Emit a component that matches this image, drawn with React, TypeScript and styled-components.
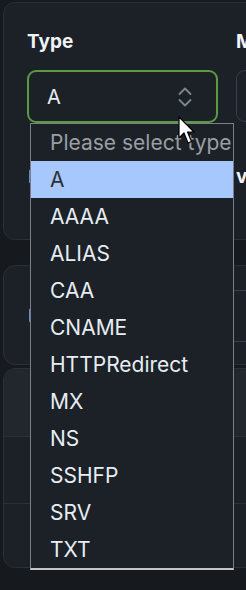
import * as React from 'react';
import styled, { createGlobalStyle } from 'styled-components';

const TYPES = ['A', 'AAAA', 'ALIAS', 'CAA', 'CNAME', 'HTTPRedirect', 'MX', 'NS', 'SSHFP', 'SRV', 'TXT'];

const App: React.FC = () => {
	const selected = 'A';
	return (
		<>
			<GlobalStyle />
			<Page>
				<RecordCard>
					<FieldGrid>
						<Field>
							<Label>Type</Label>
							<SelectWrap>
								<SelectBox $focused>
									<span>{selected}</span>
									<svg width="14" height="20" viewBox="0 0 14 20" fill="none">
										<polyline points="1.5,7 7,1.5 12.5,7" stroke="#7d8590" strokeWidth="1.8" strokeLinecap="round" strokeLinejoin="round" />
										<polyline points="1.5,13 7,18.5 12.5,13" stroke="#7d8590" strokeWidth="1.8" strokeLinecap="round" strokeLinejoin="round" />
									</svg>
								</SelectBox>
								<ListBox>
									<Option $placeholder>Please select type</Option>
									{TYPES.map((t) => (
										<Option key={t} $active={t === selected}>
											{t}
										</Option>
									))}
								</ListBox>
								<Cursor width="18" height="30" viewBox="0 0 18 30">
									<path d="M1 1 L1 22 L6 17 L10 27 L13.5 25.5 L9.5 16 L16 16 Z" fill="#fff" stroke="#000" strokeWidth="1.2" strokeLinejoin="round" />
								</Cursor>
							</SelectWrap>
						</Field>
						<Field>
							<Label>MX Priority</Label>
							<Input />
						</Field>
					</FieldGrid>
					<OptionRow>
						<Check />
						<SubLabel>value</SubLabel>
					</OptionRow>
				</RecordCard>

				<ToggleCard>
					<Check />
					<Input />
				</ToggleCard>

				<TableCard>
					<TableHead />
					<TableRow />
					<TableRow />
				</TableCard>
			</Page>
		</>
	);
};

const GlobalStyle = createGlobalStyle`
	body {
		margin: 0;
		background: #16191d;
		font-family: Inter, 'Noto Sans', sans-serif;
	}
`;

const Page = styled.div`
	width: 246px;
	height: 590px;
	overflow: hidden;
	padding: 2px 0 0 3px;
	box-sizing: border-box;
	display: flex;
	flex-direction: column;
`;

const Card = styled.div`
	width: 300px;
	flex-shrink: 0;
	box-sizing: border-box;
	background: #1c2127;
	border: 1px solid #2b3037;
	border-radius: 12px;
`;

const RecordCard = styled(Card)`
	height: 238px;
	padding: 27px 23px 0 23px;
`;

const FieldGrid = styled.div`
	display: grid;
	grid-template-columns: 191px 1fr;
	column-gap: 18px;
`;

const Field = styled.div`
	display: flex;
	flex-direction: column;
	gap: 16px;
`;

const Label = styled.label`
	height: 24px;
	line-height: 24px;
	font-size: 19px;
	font-weight: 700;
	color: #f0f3f6;
	white-space: nowrap;
`;

const SelectWrap = styled.div`
	position: relative;
`;

const SelectBox = styled.div<{ $focused?: boolean }>`
	height: 53px;
	box-sizing: border-box;
	border: 2px solid ${(p) => (p.$focused ? '#5a9a42' : '#3a4049')};
	border-radius: 9px;
	display: flex;
	align-items: center;
	justify-content: space-between;
	padding: 0 24px 0 18px;
	font-size: 20px;
	color: #e6edf3;
`;

const ListBox = styled.div`
	position: absolute;
	left: 3px;
	top: 53px;
	width: 204px;
	box-sizing: border-box;
	background: #1c2127;
	border: 1px solid #7b7e82;
	border-bottom: 2px solid #c4c6c8;
	z-index: 5;
`;

const Option = styled.div<{ $active?: boolean; $placeholder?: boolean }>`
	height: 37px;
	line-height: 37px;
	padding-left: 19px;
	font-size: 21px;
	white-space: nowrap;
	overflow: hidden;
	color: ${(p) => (p.$placeholder ? '#9a9ea3' : p.$active ? '#2d3035' : '#e6edf3')};
	background: ${(p) => (p.$active ? '#a6c8fc' : 'transparent')};
`;

const Cursor = styled.svg`
	position: absolute;
	left: 151px;
	top: 46px;
	z-index: 6;
`;

const Input = styled.div`
	height: 52px;
	box-sizing: border-box;
	border: 1px solid #3a4049;
	border-radius: 9px;
`;

const OptionRow = styled.div`
	margin-top: 42px;
	display: grid;
	grid-template-columns: 190px 1fr;
	column-gap: 18px;
	align-items: center;
	padding-left: 2px;
`;

const Check = styled.span`
	width: 15px;
	height: 15px;
	box-sizing: border-box;
	border: 1px solid #5b8ddf;
	border-radius: 2px;
`;

const SubLabel = styled.span`
	font-size: 19px;
	font-weight: 700;
	color: #f0f3f6;
	margin-left: -1px;
`;

const ToggleCard = styled(Card)`
	margin-top: 25px;
	height: 100px;
	padding: 0 23px 0 25px;
	display: flex;
	align-items: center;
	& > ${Input} {
		width: 200px;
		margin-left: 190px;
		margin-top: 2px;
	}
`;

const TableCard = styled(Card)`
	margin-top: 3px;
	height: 200px;
	overflow: hidden;
`;

const TableHead = styled.div`
	height: 67px;
	background: #22272e;
`;

const TableRow = styled.div`
	height: 66px;
	border-top: 1px solid #2b3037;
`;

export default App;
